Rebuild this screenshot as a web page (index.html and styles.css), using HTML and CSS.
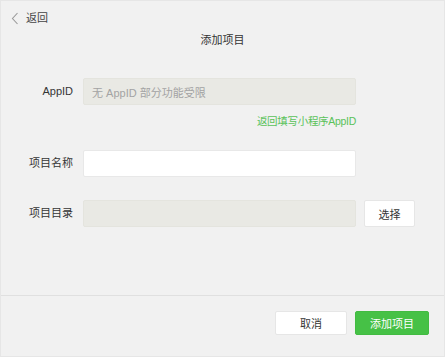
FILE: index.html
```html
<!DOCTYPE html>
<html lang="zh-CN">
<head>
<meta charset="utf-8">
<title>添加项目</title>
<link rel="stylesheet" href="styles.css">
</head>
<body>
<div class="window">
  <div class="main">
    <div class="back">
      <svg class="chev" width="8" height="13" viewBox="0 0 8 13"><polyline points="6.5,1 1.5,6.5 6.5,12" fill="none" stroke="#9a9a9a" stroke-width="1.1"/></svg>
      <span class="back-text">返回</span>
    </div>
    <div class="title">添加项目</div>
    <div class="form">
      <div class="label">AppID</div>
      <div class="field disabled"><span class="ph">无 AppID 部分功能受限</span></div>
      <div></div>

      <div></div>
      <div class="link-row"><span class="link">返回填写小程序AppID</span></div>
      <div></div>

      <div class="label row2">项目名称</div>
      <div class="field row2"></div>
      <div class="row2"></div>

      <div class="label row3">项目目录</div>
      <div class="field disabled row3"></div>
      <div class="row3"><div class="btn select">选择</div></div>
    </div>
  </div>
  <div class="footer">
    <div class="btn cancel">取消</div>
    <div class="btn primary">添加项目</div>
  </div>
</div>
</body>
</html>
```

FILE: styles.css
```css
html, body {
  margin: 0;
  padding: 0;
  background: #f1f1f1;
}
.window {
  width: 445px;
  height: 357px;
  box-sizing: border-box;
  border: 1px solid #e6e6e6;
  background: #f1f1f1;
  display: flex;
  flex-direction: column;
  font-family: "Liberation Sans", "Noto Sans CJK SC", sans-serif;
  font-size: 11px;
  color: #353535;
}
.main {
  flex: 1;
}
.back {
  display: flex;
  align-items: center;
  height: 14px;
  padding: 10px 0 0 10px;
}
.chev {
  display: block;
}
.back-text {
  margin-left: 7px;
  line-height: 14px;
  color: #444;
}
.title {
  margin-top: 8px;
  text-align: center;
  line-height: 14px;
  color: #333;
}
.form {
  display: grid;
  grid-template-columns: 72px 273px auto;
  column-gap: 10px;
  margin-top: 31px;
  align-items: center;
}
.label {
  text-align: right;
  line-height: 27px;
  color: #353535;
}
.field {
  height: 27px;
  box-sizing: border-box;
  background: #ffffff;
  border: 1px solid #e8e8e8;
  border-radius: 2px;
  display: flex;
  align-items: center;
  padding-left: 8px;
}
.field.disabled {
  background: #e9e9e4;
  border-color: #e4e4de;
}
.ph {
  color: #a3a3a3;
}
.link-row {
  text-align: right;
  line-height: 14px;
  margin-top: 9px;
}
.link {
  color: #5ac25a;
  font-size: 10.5px;
  letter-spacing: -0.3px;
}
.row2 {
  margin-top: 22px;
}
.row3 {
  margin-top: 23px;
}
.btn {
  box-sizing: border-box;
  display: flex;
  align-items: center;
  justify-content: center;
  border-radius: 2px;
}
.select {
  width: 51px;
  height: 27px;
  margin-left: -2px;
  background: #fff;
  border: 1px solid #e6e6e6;
  color: #353535;
}
.footer {
  height: 61px;
  box-sizing: border-box;
  border-top: 1px solid #e0e0e0;
  display: flex;
  justify-content: flex-end;
  align-items: flex-start;
  gap: 8px;
  padding: 15px 15px 0 0;
}
.cancel {
  width: 72px;
  height: 24px;
  background: #fff;
  border: 1px solid #e6e6e6;
  color: #353535;
}
.primary {
  width: 74px;
  height: 24px;
  background: #46c146;
  border: 1px solid #42bb42;
  color: #fff;
}
```
